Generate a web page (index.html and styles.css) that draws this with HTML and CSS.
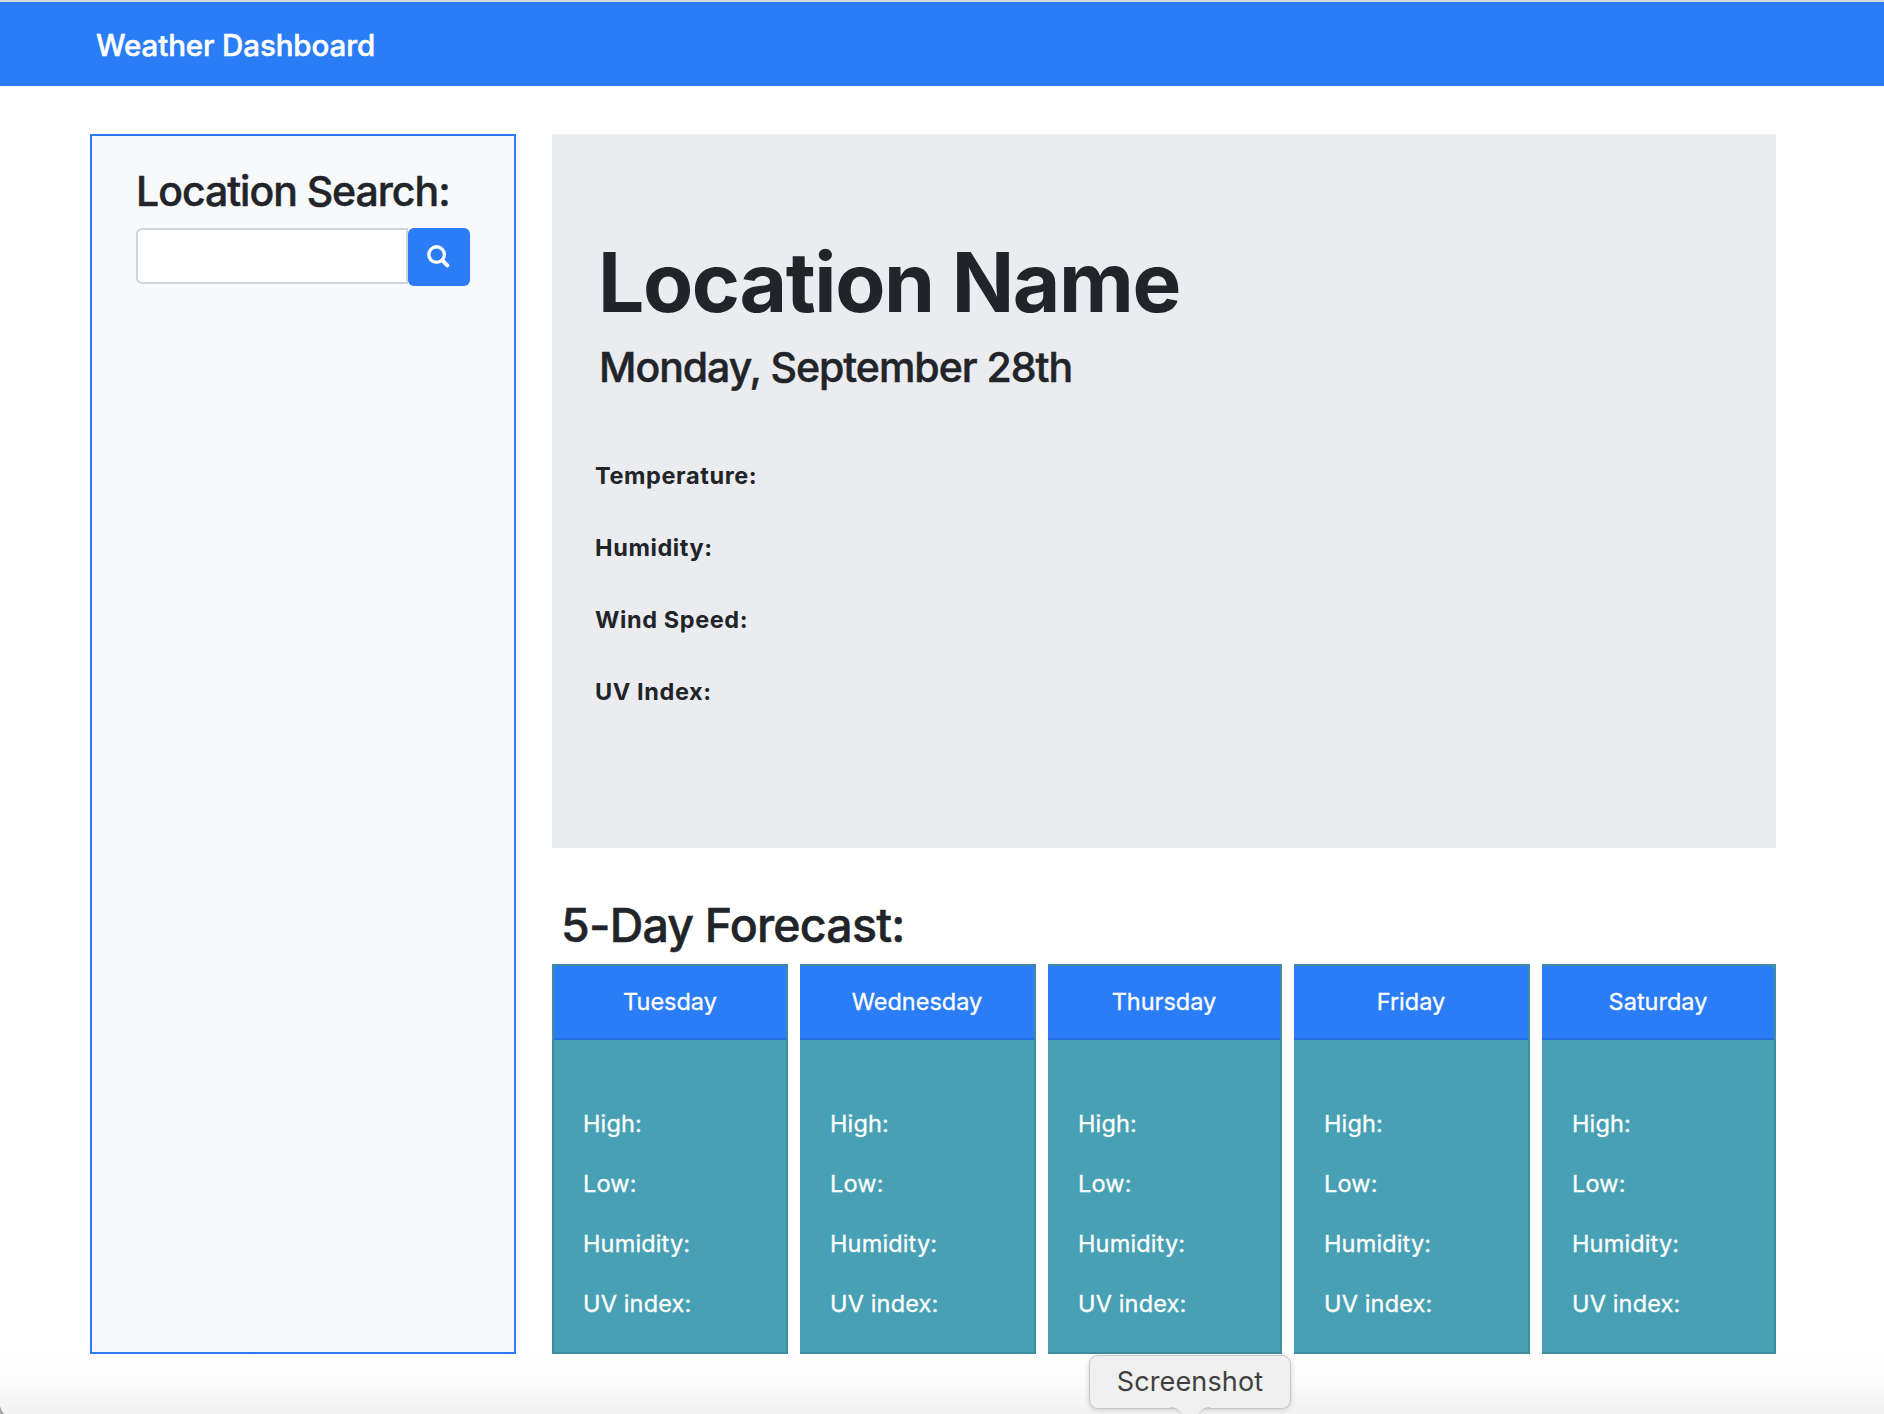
FILE: index.html
```html
<!DOCTYPE html>
<html lang="en">
<head>
<meta charset="utf-8">
<title>Weather Dashboard</title>
<link rel="stylesheet" href="styles.css">
</head>
<body>
<header class="navbar"><span class="brand">Weather Dashboard</span></header>
<main class="layout">
  <aside class="sidebar">
    <h3 class="search-title">Location Search:</h3>
    <form class="search">
      <input class="search-input" type="text" aria-label="Location">
      <button class="search-button" type="button" aria-label="Search">
        <svg width="24" height="24" viewBox="0 0 24 24" fill="none" stroke="#fff"><circle cx="10.6" cy="10.6" r="7.8" stroke-width="3.4"/><path d="M16.3 16.3l5 5" stroke-width="4" stroke-linecap="round"/></svg>
      </button>
    </form>
  </aside>
  <section class="content">
    <div class="current">
      <h1 class="place">Location Name</h1>
      <h2 class="date">Monday, September 28th</h2>
      <ul class="stats">
        <li>Temperature:</li>
        <li>Humidity:</li>
        <li>Wind Speed:</li>
        <li>UV Index:</li>
      </ul>
    </div>
    <h2 class="forecast-title">5-Day Forecast:</h2>
    <div class="cards">
      <article class="card"><h4 class="day">Tuesday</h4><ul class="readings"><li>High:</li><li>Low:</li><li>Humidity:</li><li>UV index:</li></ul></article>
      <article class="card"><h4 class="day">Wednesday</h4><ul class="readings"><li>High:</li><li>Low:</li><li>Humidity:</li><li>UV index:</li></ul></article>
      <article class="card"><h4 class="day">Thursday</h4><ul class="readings"><li>High:</li><li>Low:</li><li>Humidity:</li><li>UV index:</li></ul></article>
      <article class="card"><h4 class="day">Friday</h4><ul class="readings"><li>High:</li><li>Low:</li><li>Humidity:</li><li>UV index:</li></ul></article>
      <article class="card"><h4 class="day">Saturday</h4><ul class="readings"><li>High:</li><li>Low:</li><li>Humidity:</li><li>UV index:</li></ul></article>
    </div>
  </section>
</main>
<div class="corner"></div>
<div class="tooltip">Screenshot
  <svg class="tip-arrow" width="40" height="8" viewBox="0 0 40 8"><path d="M0 0H40C34 0 32 3 28 8H12C8 3 6 0 0 0Z" fill="#f0f0f0"/><path d="M0 .5C6 .5 8 3 12 8M40 .5C34 .5 32 3 28 8" fill="none" stroke="#c8c8c8"/></svg>
</div>
</body>
</html>
```
FILE: styles.css
```css
* { box-sizing: border-box; }
html, body { margin: 0; height: 1414px; overflow: hidden; }
body {
  position: relative;
  font-family: Inter, "Liberation Sans", sans-serif;
  font-size: 23.5px;
  color: #212529;
  background: linear-gradient(#fff 0, #fff 1340px, #fcfcfc 1380px, #f2f2f2 1414px);
}
h1, h2, h3, h4, ul { margin: 0; padding: 0; list-style: none; }
h1, h2, h3, h4, li { white-space: nowrap; }

.navbar {
  height: 86px;
  padding: 2px 0 0 96px;
  border-top: 2px solid #d5d8dd;
  background: #2a7cf7;
  color: #fff;
}
.brand { font-size: 29.5px; font-weight: 500; line-height: 82px; letter-spacing: -0.1px; }
.brand, .search-title, .date, .forecast-title { -webkit-text-stroke: .5px currentColor; }

.layout { display: flex; gap: 36px; padding: 48px 108px 0 90px; }
.sidebar {
  width: 426px;
  height: 1220px;
  padding: 31px 44px 0;
  border: 2px solid #2a7cf7;
  background: #f8f9fb;
}
.search-title { margin: 0 0 13px; font-size: 41px; font-weight: 500; line-height: 48px; letter-spacing: -1.03px; }
.search { display: flex; align-items: flex-start; width: 334px; }
.search-input {
  flex: 1;
  min-width: 0;
  height: 56px;
  border: 2px solid #ced4da;
  border-radius: 6px 0 0 6px;
  background: #fff;
}
.search-button {
  display: flex;
  width: 62px;
  height: 58px;
  padding: 16px 0 0 18px;
  border: 0;
  border-radius: 6px;
  background: #2a7cf7;
}

.content { width: 1224px; }
.current { height: 714px; padding: 100px 43px 0; background: #ebecf0; }
.place { padding-left: 3px; font-size: 82px; font-weight: 700; line-height: 98px; letter-spacing: -1.4px; }
.date { margin-top: 10px; padding-left: 4px; font-size: 41px; font-weight: 500; line-height: 50px; letter-spacing: -1.02px; }
.stats { margin-top: 48px; font-weight: 700; line-height: 72px; letter-spacing: .6px; }

.forecast-title { margin: 49px 0 11px; padding-left: 9px; font-size: 46.5px; font-weight: 500; line-height: 56px; letter-spacing: -0.8px; }
.cards { display: grid; grid-template-columns: 236px 236px 234px 236px 234px; gap: 12px; }
.card {
  height: 390px;
  border: 2px solid #3f8e9f;
  border-left-width: 0;
  background: #48a0b4;
  color: #fff;
  -webkit-text-stroke: .3px currentColor;
}
.card:first-child { border-left-width: 2px; }
.day {
  height: 74px;
  border-bottom: 2px solid #2670de;
  background: #2a7cf7;
  font-size: 23.5px;
  font-weight: 400;
  line-height: 72px;
  text-align: center;
}
.card:first-child .day { border-top-left-radius: 3px; }
.card:last-child .day { border-top-right-radius: 4px; }
.readings { padding: 54px 0 0 30px; line-height: 60px; letter-spacing: .15px; }
.card:first-child .readings { padding-left: 29px; }

.corner {
  position: absolute;
  left: 0;
  bottom: 0;
  width: 4px;
  height: 8px;
  background: #a8a8a8;
  clip-path: polygon(0 0, 35% 50%, 100% 100%, 0 100%);
}
.tooltip {
  position: absolute;
  left: 1090px;
  top: 1356px;
  width: 200px;
  height: 52px;
  border-radius: 8px;
  background: #f0f0f0;
  box-shadow: 0 0 0 1px #c8c8c8, 0 1px 6px rgba(0, 0, 0, .22);
  color: #3f3f3f;
  font-size: 27px;
  line-height: 51px;
  letter-spacing: .15px;
  text-align: center;
}
.tip-arrow { position: absolute; left: 80px; top: 51px; }
```
